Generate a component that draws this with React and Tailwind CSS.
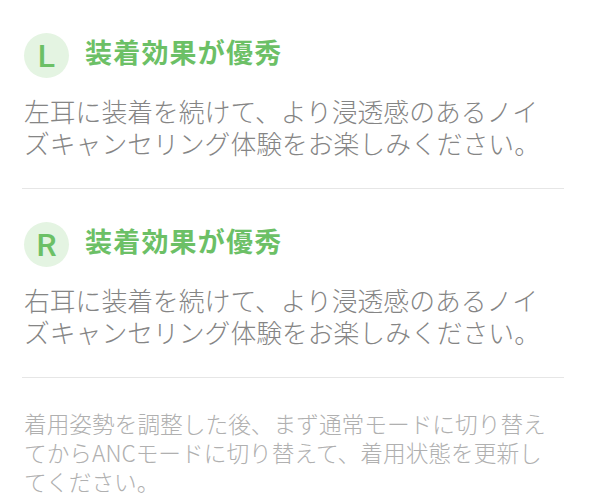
import React from 'react';

const sections = [
  { side: 'L', body: '左耳に装着を続けて、より浸透感のあるノイズキャンセリング体験をお楽しみください。' },
  { side: 'R', body: '右耳に装着を続けて、より浸透感のあるノイズキャンセリング体験をお楽しみください。' },
];

function Section({ side, body }) {
  return (
    <div className="pt-[33px]">
      <div className="flex items-center">
        <div className="ml-[2px] flex h-[45px] w-[45px] items-center justify-center rounded-full bg-[#e4f4e2] font-['Roboto',sans-serif] text-[32px] font-medium text-[#6cc066]">
          {side}
        </div>
        <div className="ml-[16px] -mt-[7px] text-[27px] font-bold tracking-[1.2px] text-[#6cc066]">
          装着効果が優秀
        </div>
      </div>
      <p className="mt-[17px] pl-[2px] pr-[14px] text-[25.8px] font-light leading-[32px] text-[#858585]">{body}</p>
      <div className="mt-[29px] h-px bg-[#e6e6e6]" />
    </div>
  );
}

export default function App() {
  return (
    <div className="min-h-screen bg-white pl-[22px] pr-[26px] font-['Noto_Sans_CJK_JP',sans-serif]">
      {sections.map((s) => (
        <Section key={s.side} {...s} />
      ))}
      <p className="mt-[31px] pl-[2px] pr-[10px] text-[22.7px] font-light leading-[29px] text-[#b0b0b0]">
        着用姿勢を調整した後、まず通常モードに切り替えてからANCモードに切り替えて、着用状態を更新してください。
      </p>
    </div>
  );
}
